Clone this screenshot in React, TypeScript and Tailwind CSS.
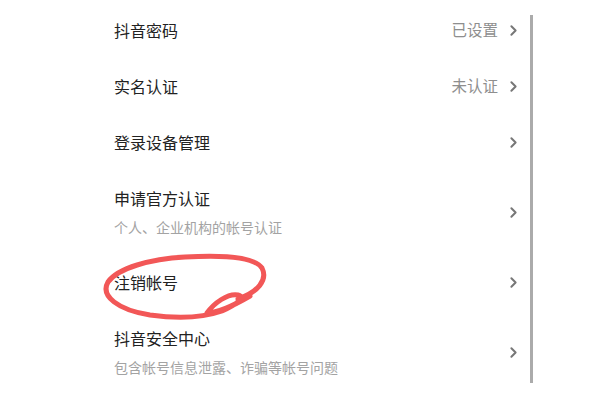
import { ChevronRight } from "lucide-react";

interface Row {
  title: string;
  value?: string;
  desc?: string;
}

const rows: Row[] = [
  { title: "抖音密码", value: "已设置" },
  { title: "实名认证", value: "未认证" },
  { title: "登录设备管理" },
  { title: "申请官方认证", desc: "个人、企业机构的帐号认证" },
  { title: "注销帐号" },
  { title: "抖音安全中心", desc: "包含帐号信息泄露、诈骗等帐号问题" },
];

export default function App() {
  return (
    <div
      className="relative h-[400px] w-[600px] overflow-hidden bg-white"
      style={{ fontFamily: '"Noto Sans CJK SC", "Noto Sans", sans-serif' }}
    >
      <div className="flex flex-col pl-[114px] pr-[82px] pt-[2px]">
        {rows.map((r) => (
          <div
            key={r.title}
            className={`flex items-center justify-between ${r.desc ? "h-[84px]" : "h-[56px]"}`}
          >
            <div className="flex flex-col">
              <span className="text-[16px] leading-[22px] text-[#222222]">{r.title}</span>
              {r.desc && (
                <span className="mt-[8px] text-[14px] leading-[20px] text-[#a3a3a3]">{r.desc}</span>
              )}
            </div>
            <div className="flex items-center gap-[7px]">
              {r.value && <span className="text-[15.5px] text-[#8e8e8e]">{r.value}</span>}
              <ChevronRight size={17} strokeWidth={2.8} className="mr-[-4px] text-[#777777]" />
            </div>
          </div>
        ))}
      </div>

      {/* scroll indicator */}
      <div className="absolute left-[530px] top-[15px] h-[368px] w-[3px] bg-[#ababab]" />

      {/* hand-drawn red circle */}
      <svg className="absolute left-0 top-0" width={600} height={400} viewBox="0 0 600 400">
        <path
          d="M 238 299 C 258 292 268 280 262 268 C 254 256 220 255 185 257 C 150 259 118 268 108 282 C 100 296 118 310 150 315 C 180 319 205 317 222 311 C 236 305 246 297 238 295 C 228 293 214 303 207 313 C 218 313 238 303 250 296"
          fill="none"
          stroke="#f25757"
          strokeWidth={5}
          strokeLinecap="round"
          strokeLinejoin="round"
        />
      </svg>
    </div>
  );
}
